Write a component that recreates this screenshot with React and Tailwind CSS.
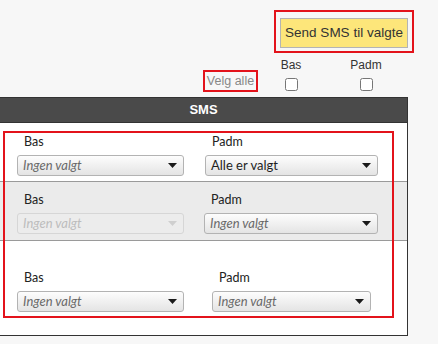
import React from 'react';

const font = { fontFamily: 'Lato, "Open Sans", sans-serif' };

function Arrow({ disabled }) {
  return (
    <svg width="9" height="5" viewBox="0 0 9 5" className="shrink-0">
      <path d="M0 0 L9 0 L4.5 5 Z" fill={disabled ? '#cfcfcf' : '#1a1a1a'} />
    </svg>
  );
}

function Select({ value, empty, disabled, width }) {
  return (
    <div
      className={`flex items-center justify-between h-[21px] pl-[5px] pr-[6px] rounded-[3px] border ${
        disabled
          ? 'border-[#d6d6d6] bg-[#ececec]'
          : 'border-[#b3b3b3] bg-gradient-to-b from-[#fdfdfd] to-[#e4e4e4]'
      }`}
      style={{ width }}
    >
      <span
        className={`text-[13px] leading-none ${empty ? 'italic' : ''} ${
          disabled ? 'text-[#bdbdbd]' : empty ? 'text-[#6a6a6a]' : 'text-[#1f1f1f]'
        }`}
      >
        {value}
      </span>
      <Arrow disabled={disabled} />
    </div>
  );
}

function Field({ label, children }) {
  return (
    <div className="flex flex-col gap-[6px]">
      <span className="text-[12.5px] leading-[14px] text-[#222] pl-[7px]">{label}</span>
      {children}
    </div>
  );
}

function Checkbox() {
  return <div className="w-[13px] h-[13px] rounded-[2.5px] border border-[#767676] bg-white" />;
}

export default function App() {
  return (
    <div className="w-[438px] h-[344px] bg-[#f7f7f7] overflow-hidden" style={{ fontFamily: '"Liberation Sans", Arial, sans-serif' }}>
      {/* knapp */}
      <div className="flex justify-end pt-[10px] pr-[24px]">
        <div className="border-2 border-[#e3131b] pt-[6px] pb-[3px] px-[4px]">
          <button className="w-[128px] h-[30px] bg-[#fde67a] border border-[#b4b4b4] text-[13.5px] text-[#333] leading-none">
            Send SMS til valgte
          </button>
        </div>
      </div>

      {/* velg alle */}
      <div className="flex justify-end items-end pr-[47px] mt-[5px] h-[34px]">
        <div className="border-2 border-[#e3131b] w-[55px] h-[22px] flex items-center justify-center text-[12.5px] text-[#888]">
          Velg alle
        </div>
        <div className="w-[50px] ml-[8px] flex flex-col items-center gap-[6px] pb-[1px]">
          <span className="text-[12px] leading-[14px] text-[#333]">Bas</span>
          <Checkbox />
        </div>
        <div className="w-[50px] ml-[25px] flex flex-col items-center gap-[6px] pb-[1px]">
          <span className="text-[12px] leading-[14px] text-[#333]">Padm</span>
          <Checkbox />
        </div>
      </div>

      {/* panel */}
      <div className="mt-[5px] w-[408px] border-r border-b border-[#333] bg-white">
        <div className="h-[26px] bg-[#4a4a4a] border-t border-b border-[#333] flex items-center justify-center text-white font-bold text-[13px]">
          SMS
        </div>
        <div className="relative" style={font}>
          <div className="flex gap-[21px] pl-[17px] pt-[12px] pb-[5px] border-b border-[#9a9a9a]">
            <Field label="Bas">
              <Select value="Ingen valgt" empty width={167} />
            </Field>
            <Field label="Padm">
              <Select value="Alle er valgt" width={173} />
            </Field>
          </div>
          <div className="flex gap-[20px] pl-[17px] pt-[11px] pb-[6px] bg-[#ebebeb] border-b border-[#9a9a9a]">
            <Field label="Bas">
              <Select value="Ingen valgt" empty disabled width={167} />
            </Field>
            <Field label="Padm">
              <Select value="Ingen valgt" empty width={174} />
            </Field>
          </div>
          <div className="flex gap-[28px] pl-[17px] pt-[30px] pb-[23px]">
            <Field label="Bas">
              <Select value="Ingen valgt" empty width={167} />
            </Field>
            <Field label="Padm">
              <Select value="Ingen valgt" empty width={159} />
            </Field>
          </div>
          <div className="absolute left-[3px] top-[8px] w-[391px] h-[187px] border-2 border-[#e3131b] pointer-events-none" />
        </div>
      </div>
    </div>
  );
}
